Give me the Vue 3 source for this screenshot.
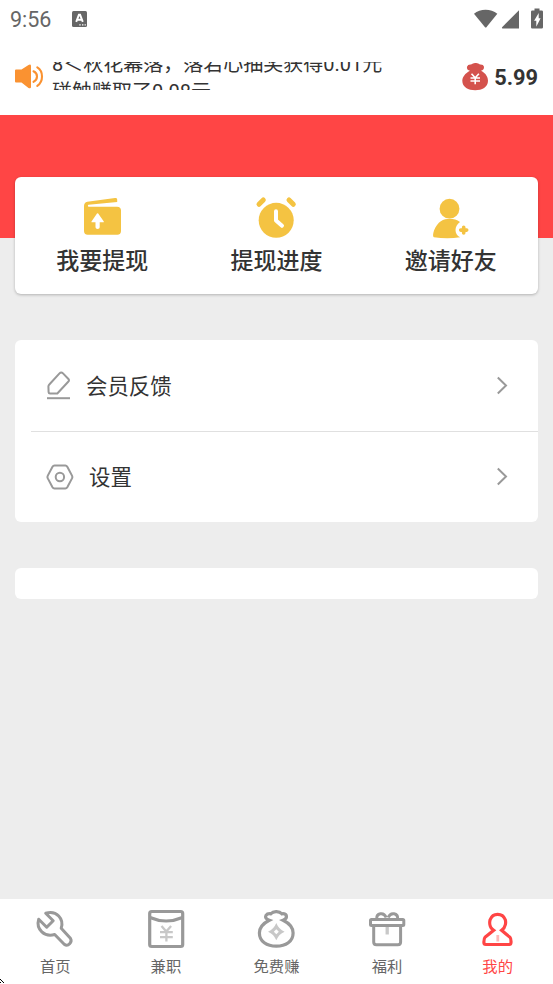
<script setup>
const notices = ['8＜秋花幕落，落若心抽奖获得0.01元', '碰触赚取了0.08元']
const actions = [
  { id: 'withdraw', label: '我要提现' },
  { id: 'progress', label: '提现进度' },
  { id: 'invite', label: '邀请好友' },
]
const rows = [
  { id: 'feedback', label: '会员反馈' },
  { id: 'settings', label: '设置' },
]
const tabs = [
  { id: 'home', label: '首页' },
  { id: 'job', label: '兼职' },
  { id: 'earn', label: '免费赚' },
  { id: 'gift', label: '福利' },
  { id: 'mine', label: '我的', active: true },
]
</script>

<template>
  <div class="screen">
    <div class="status">
      <span class="clock">9:56</span>
      <svg class="badge-a" width="15" height="16" viewBox="0 0 15 16">
        <rect width="15" height="16" rx="1.5" fill="#666" />
        <path d="M4.200 10.800 6.900 3.800h1.200l2.700 7M5.300 8.800h4.400" fill="none" stroke="#fff" stroke-width="1.900" />
        <path d="M7.300 13.800h1.400M10 13.800h1.400M12.600 13.800h1.200" stroke="#fff" stroke-width="1.300" />
      </svg>
      <svg class="signals" width="72" height="22" viewBox="472 7.500 72 22">
        <path d="M474 13.2C480 7.900 491 7.900 497.300 13.200L486.600 26.500Q485.700 27.500 484.800 26.500Z" fill="#666" />
        <path d="M519 9.800V28H502.600Q501.400 27.500 502.300 26.500Z" fill="#666" />
        <path d="M534.500 8h5v2h2.200q1.300 0 1.300 1.300v15.400q0 1.300-1.300 1.300h-9.400q-1.300 0-1.300-1.300V11.300q0-1.300 1.300-1.300h2.200z" fill="#666" />
        <path d="M538.700 12.500v5.200h1.900l-4.300 8.500v-6h-2.200z" fill="#fff" />
      </svg>
    </div>

    <header class="top">
      <svg width="29" height="26" viewBox="15 64 29 26">
        <path d="M15 70.500q0-1 1-1h5.500l7-4.600q2.500-1 2.500 1v21q0 2-2.500 1l-7-5.400H16q-1 0-1-1z" fill="#fa9231" />
        <path d="M33.500 71.300q3.500 1.600 3.500 5.100t-3.500 5.400M37.300 67.300q4.700 2.900 4.700 9.100t-4.700 9.400" fill="none" stroke="#fa9231" stroke-width="2.100" stroke-linecap="round" />
      </svg>
      <div class="ticker">
        <div class="ticker-track">
          <p v-for="n in notices" :key="n">{{ n }}</p>
        </div>
      </div>
      <svg width="28" height="28" viewBox="461 62.800 28 28">
        <path d="M470 70.500Q466.500 70 467 66.500Q467.800 64 471 64.300Q473 63 475 62.800Q478 62.600 480 64.300Q483.500 64 484 66.500Q484.200 70 481 70.500C486 73 488 77 488 80.500C488 87 482 90 475.200 90S462.300 87 462.300 80.500C462.300 77 465 73 470 70.500Z" fill="#d4524d" />
        <path d="M471.500 73.500l3.700 4 3.700-4M470.500 77.800h9.500M470.500 80.800h9.500M475.200 77.500v6.500" fill="none" stroke="#fff" stroke-width="1.600" />
      </svg>
      <strong class="balance">5.99</strong>
    </header>

    <div class="banner"></div>

    <main>
      <section class="actions">
        <button v-for="a in actions" :key="a.id" class="action">
          <svg v-if="a.id === 'withdraw'" width="44" height="44" viewBox="80 196 44 44">
            <path d="M84 206Q84 202.600 87.300 201.800L115 198.100Q117 197.800 117.200 199.500V202L88.500 204.800Q87.300 205 88.300 206.700H117Q121 206.700 121 210.500V231Q121 234.700 117.300 234.700H87.700Q84 234.700 84 231Z" fill="#f4c342" />
            <path d="M97 213.600q.600-.600 1.200 0l5.600 7.800q.300.900-.700.900h-3.400v5q0 1.600-2.100 1.600t-2.100-1.600v-5h-3.300q-1.100 0-.700-.900z" fill="#fff" />
          </svg>
          <svg v-else-if="a.id === 'progress'" width="44" height="44" viewBox="254 196 44 44">
            <circle cx="276.200" cy="220.300" r="17.500" fill="#f4c342" />
            <path d="M259 204.300l4.300-4.300M289 200l4.300 4.300" stroke="#f4c342" stroke-width="5" stroke-linecap="round" />
            <path d="M276 211.300v9.200l6 5.300" fill="none" stroke="#fff" stroke-width="4" stroke-linecap="round" stroke-linejoin="round" />
          </svg>
          <svg v-else width="44" height="44" viewBox="428.500 196 44 44">
            <circle cx="449" cy="208.700" r="9.900" fill="#f4c342" />
            <path d="M433.400 237.300Q431.600 236.600 433.500 230.500C437 221.500 443 218.700 449.200 218.700Q455 218.700 459.500 222C453.500 226 453.500 234.500 459.600 237.300Q447 239 433.400 237.300Z" fill="#f4c342" />
            <path d="M463.200 227.200v5.800M460.200 230.100h6" stroke="#f4c342" stroke-width="3.600" stroke-linecap="round" />
          </svg>
          <span>{{ a.label }}</span>
        </button>
      </section>

      <section class="menu">
        <div v-for="r in rows" :key="r.id" class="row" :class="r.id">
          <svg v-if="r.id === 'feedback'" width="28" height="30" viewBox="46 370.700 28 30">
            <path d="M59.500 373.100Q61.200 371.200 63 373.100L68.200 378.400Q69.800 380 68.200 381.500L57.300 393.200H50Q48.700 393.200 48.600 391.800L48.400 386Q48.500 385 49.300 384.200Z" fill="none" stroke="#999" stroke-width="2" stroke-linejoin="round" />
            <path d="M47 397.900h23" stroke="#999" stroke-width="2" />
          </svg>
          <svg v-else width="28" height="30" viewBox="46 461.500 28 30">
            <path d="M54.500 465h10.800q1.300 0 2 1.200l4.700 8.900q.700 1.400 0 2.800l-4.700 8.900q-.700 1.200-2 1.200H54.500q-1.300 0-2-1.200l-4.700-8.900q-.700-1.400 0-2.800l4.700-8.900q.700-1.200 2-1.200z" fill="none" stroke="#999" stroke-width="2" />
            <circle cx="59.900" cy="476.500" r="4.200" fill="none" stroke="#999" stroke-width="2" />
          </svg>
          <span>{{ r.label }}</span>
          <svg class="chevron" width="11" height="19" viewBox="0 0 11 19">
            <path d="M.8 1.500 9 9.500.8 17.500" fill="none" stroke="#999" stroke-width="2" />
          </svg>
        </div>
      </section>

      <section class="blank"></section>
    </main>

    <nav class="tabs">
      <a v-for="t in tabs" :key="t.id" class="tab" :class="{ active: t.active }">
        <svg v-if="t.id === 'home'" width="44" height="44" viewBox="33.300 908 44 44" fill="none" stroke="#999" stroke-width="3">
          <path d="M46 913.300C57 909.800 64.500 919 61.500 928.200L70.700 938.300C73 942 68.500 947.300 64.500 944.300L55 934.500C45 937.500 36 929.500 39 919.200L47 927.200L53.500 920.700Z" stroke-linejoin="round" />
        </svg>
        <svg v-else-if="t.id === 'job'" width="44" height="44" viewBox="144 908 44 44" fill="none" stroke="#999" stroke-width="3.200">
          <rect x="149.700" y="911.500" width="33" height="35" rx="2" />
          <path d="M150 917.500Q166 924.500 182.500 917.500" />
          <path d="M161.500 926l4.800 5.500 4.800-5.500M160 932.200h12.800M160 937.200h12.800M166.400 931v10.500" stroke="#c8c8c8" stroke-width="2.300" />
        </svg>
        <svg v-else-if="t.id === 'earn'" width="44" height="44" viewBox="254.200 908 44 44" fill="none" stroke="#999" stroke-width="3.200">
          <path d="M269.500 920.200Q264.500 918.500 266.200 915.300Q267.600 913.300 271 913.800Q273 911.500 276.500 911.600Q280 911.500 282 913.800Q285.500 913.300 286.500 915.500Q287.500 918.700 283.300 920.200C290 923.500 293.300 928 293.300 933C293.300 941.500 286 946.200 276.500 946.200S259.600 941.500 259.600 933C259.600 928 263 923.500 269.500 920.200Z" />
          <path d="M276.500 923q2.500 6.300 8.300 8.700-5.800 2.400-8.300 8.600-2.500-6.200-8.300-8.600 5.800-2.400 8.300-8.700z" fill="#c8c8c8" stroke="none" />
          <path d="M276.500 929.200l2.500 2.500-2.500 2.500-2.500-2.500z" fill="#fff" stroke="none" />
        </svg>
        <svg v-else-if="t.id === 'gift'" width="44" height="44" viewBox="365 908 44 44" fill="none" stroke="#999" stroke-width="3">
          <rect x="370.500" y="919.500" width="33.300" height="6" rx="1" />
          <path d="M373.700 926v16q0 2.700 2.700 2.700h21.500q2.700 0 2.700-2.700v-16M376.700 919c-.500-6 7-7.500 9.500-1.500M397.700 919c.500-6-7-7.500-9.500-1.500" />
          <path d="M387.200 927v7.500" stroke="#c8c8c8" stroke-width="3.300" />
        </svg>
        <svg v-else width="44" height="44" viewBox="475.700 908 44 44" fill="none" stroke="#ff4545" stroke-width="3.200">
          <path d="M493.400 930.300C488.500 927 489.300 921.500 489.800 919.700C491.300 915.800 494 914.300 497.300 914.300S503.500 915.800 505 919.700C505.500 921.500 506 927 501.300 930.300Q505.500 934 509.700 937.300Q510.900 938.500 510.700 942.500Q510.600 944.500 509 944.500H485.500Q483.600 944.500 483.600 942.500Q483.500 938.500 484.700 937.300Q489 934 493.400 930.300Z" />
          <path d="M497.500 935v6.500" stroke="#ffb9b9" stroke-width="2.800" />
        </svg>
        <span>{{ t.label }}</span>
      </a>
    </nav>
    <svg class="corner" width="5" height="5" viewBox="0 0 5 5">
      <path d="M0 0h1v1H0zM1 1h1v1H1zM2 2h1v1H2zM3 3h1v1H3zM0 3h1v1H0z" fill="#000" />
    </svg>
  </div>
</template>

<style>
body {
  margin: 0;
}
</style>

<style scoped>
.screen {
  position: relative;
  display: flex;
  flex-direction: column;
  box-sizing: border-box;
  width: 553px;
  height: 984px;
  overflow: hidden;
  background: #ededed;
  color: #333;
  font-family: Roboto, "Noto Sans CJK SC", sans-serif;
}
svg {
  display: block;
  flex: none;
}
.status {
  display: flex;
  align-items: center;
  height: 38px;
  padding: 0 9px 0 10px;
  background: #fff;
}
.clock {
  width: 62px;
  font-size: 21.500px;
  color: #666;
}
.signals {
  margin-left: auto;
}
.top {
  display: flex;
  align-items: center;
  height: 77px;
  padding: 0 15px;
  background: #fff;
}
.ticker {
  width: 340px;
  height: 28px;
  margin: -1px 69px 0 8px;
  overflow: hidden;
}
.ticker-track {
  margin-top: -12px;
}
.ticker p {
  margin: 0;
  font-size: 20px;
  line-height: 28px;
  white-space: nowrap;
}
.balance {
  margin: 2px 0 0 auto;
  font-size: 21.800px;
  font-weight: 700;
}
.banner {
  flex: none;
  height: 123px;
  background: #ff4545;
}
main {
  display: flex;
  flex: 1;
  flex-direction: column;
  gap: 46px;
  margin-top: -61px;
  padding: 0 15px;
}
.actions {
  display: flex;
  height: 117px;
  border-radius: 6px;
  background: #fff;
  box-shadow: 0 1px 3px rgba(0, 0, 0, 0.25);
}
.action {
  display: flex;
  flex: 1;
  flex-direction: column;
  align-items: center;
  padding: 19px 0 0;
  border: 0;
  background: none;
  color: #333;
  font: 500 23px/43px Roboto, "Noto Sans CJK SC", sans-serif;
}
.menu {
  height: 182px;
  border-radius: 6px;
  background: #fff;
}
.row {
  display: flex;
  align-items: center;
  box-sizing: border-box;
  height: 89px;
  margin-left: 16px;
  padding: 0 30px 0 15px;
  font-size: 21.400px;
}
.row span {
  margin: -2px 0 0 12px;
}
.row.feedback {
  height: 92px;
  border-bottom: 1px solid #e0e0e0;
}
.row.settings span {
  margin-left: 15px;
}
.row .chevron {
  margin-left: auto;
}
.blank {
  height: 31px;
  border-radius: 6px;
  background: #fff;
}
.tabs {
  display: flex;
  flex: none;
  height: 85px;
  background: #fff;
}
.tab {
  display: flex;
  flex: 1;
  flex-direction: column;
  align-items: center;
  padding-top: 9px;
  color: #666;
  font-size: 15.300px;
  line-height: 30px;
}
.tab.active {
  color: #ff4545;
}
.corner {
  position: absolute;
  bottom: 0;
  left: 0;
}
</style>
